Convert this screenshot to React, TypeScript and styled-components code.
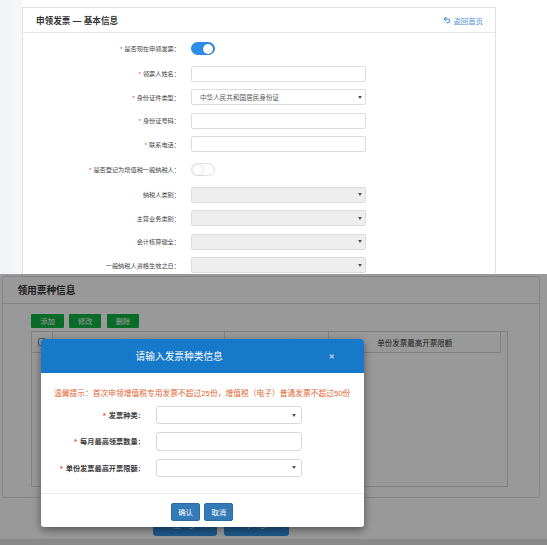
import styled, { createGlobalStyle } from "styled-components";
import { Undo2 } from "lucide-react";

const GlobalStyle = createGlobalStyle`
  html, body {
    margin: 0;
    padding: 0;
    background: #fff;
  }
  body {
    font-family: "Liberation Sans", "Noto Sans CJK SC", sans-serif;
    color: #333;
  }
  * {
    box-sizing: border-box;
  }
`;

const Page = styled.div`
  width: 547px;
  height: 545px;
  overflow: hidden;
  display: flex;
  flex-direction: column;
`;

/* ---------- top: basic info card ---------- */

const TopArea = styled.div`
  display: flex;
  height: 274px;
  flex-shrink: 0;
  overflow: hidden;
  background: #fff;
`;

const SideStrip = styled.div`
  width: 22px;
  flex-shrink: 0;
  background: linear-gradient(90deg, #f1f3f6, #f6f7f9);
`;

const InfoCard = styled.section`
  margin-top: 7px;
  width: 474px;
  border: 1px solid #e1e1e1;
  border-bottom: none;
  background: #fff;
`;

const InfoHeader = styled.div`
  height: 25px;
  display: flex;
  align-items: center;
  justify-content: space-between;
  padding: 0 12px 0 13px;
  border-bottom: 1px solid #e6e6e6;
`;

const InfoTitle = styled.h2`
  margin: 0;
  font-size: 8.6px;
  font-weight: bold;
  color: #333;
`;

const BackLink = styled.a`
  display: flex;
  align-items: center;
  gap: 2px;
  font-size: 7.4px;
  color: #4a8fd8;
  text-decoration: none;
`;

const Form = styled.div`
  padding-top: 2px;
  display: flex;
  flex-direction: column;
`;

const Row = styled.div<{ $h: number }>`
  height: ${(p) => p.$h}px;
  display: grid;
  grid-template-columns: 157px 175px;
  column-gap: 11px;
  align-items: center;
`;

const Label = styled.label`
  text-align: right;
  font-size: 6.2px;
  color: #444;
  white-space: nowrap;
`;

const Star = styled.span`
  color: #e4393c;
  margin-right: 2px;
`;

const Field = styled.div<{ $disabled?: boolean }>`
  height: 16px;
  border: 1px solid #dcdcdc;
  border-radius: 2px;
  background: ${(p) => (p.$disabled ? "#eeeeee" : "#fff")};
  display: flex;
  align-items: center;
  justify-content: space-between;
  padding: 0 3px 0 8px;
  font-size: 6.6px;
  color: #555;
`;

const Caret = styled.span<{ $size?: number }>`
  width: 0;
  height: 0;
  border-left: ${(p) => (p.$size ?? 4) / 2}px solid transparent;
  border-right: ${(p) => (p.$size ?? 4) / 2}px solid transparent;
  border-top: ${(p) => ((p.$size ?? 4) * 3) / 4}px solid #555;
  margin-left: auto;
`;

const Toggle = styled.span<{ $on?: boolean }>`
  width: 24px;
  height: 13px;
  border-radius: 7px;
  display: flex;
  align-items: center;
  justify-content: ${(p) => (p.$on ? "flex-end" : "flex-start")};
  padding: 1px;
  background: ${(p) => (p.$on ? "#2c8de6" : "#fff")};
  border: 1px solid ${(p) => (p.$on ? "#2c8de6" : "#e0e0e0")};

  &::after {
    content: "";
    width: 10px;
    height: 10px;
    border-radius: 50%;
    background: #fff;
    box-shadow: 0 0 2px rgba(0, 0, 0, 0.25);
  }
`;

/* ---------- bottom: ticket card under the modal ---------- */

const BottomArea = styled.div`
  position: relative;
  flex: 1;
  background: #fff;
  display: flex;
  flex-direction: column;
`;

const BottomContent = styled.div`
  padding: 1.5px 7px 0 1.7px;
`;

const TicketCard = styled.section`
  width: 538.3px;
  border: 1px solid #dcdcdc;
  border-radius: 3px;
`;

const TicketHeader = styled.div`
  height: 27px;
  display: flex;
  align-items: center;
  padding-left: 14.7px;
  border-bottom: 1px solid #dcdcdc;
`;

const TicketTitle = styled.h2`
  margin: 0;
  font-size: 9.7px;
  font-weight: bold;
  color: #333;
`;

const TicketBody = styled.div`
  padding: 10.8px 0 10.6px 28.7px;
`;

const ActionRow = styled.div`
  display: flex;
  gap: 5.5px;
`;

const GreenButton = styled.button`
  width: 32.3px;
  height: 13.4px;
  border: none;
  border-radius: 1px;
  background: #10b244;
  color: #fff;
  font-family: inherit;
  font-size: 7.3px;
  padding: 0;
`;

const TableWrap = styled.div`
  margin-top: 3.3px;
  width: 476.6px;
  height: 155.7px;
  border: 1px solid #d6d6d6;
`;

const TableHead = styled.div`
  width: 469px;
  height: 21.3px;
  display: grid;
  grid-template-columns: 19.6px 172px 104px 1fr;
  border-bottom: 1px solid #d6d6d6;
  border-right: 1px solid #d6d6d6;
`;

const HeadCell = styled.div`
  display: flex;
  align-items: center;
  justify-content: center;
  font-size: 7.5px;
  color: #333;
  & + & {
    border-left: 1px solid #d6d6d6;
  }
`;

const CheckBox = styled.span`
  width: 8px;
  height: 8px;
  border: 1px solid #888;
  border-radius: 2px;
  background: #fff;
`;

const NavRow = styled.div`
  margin-top: 14.7px;
  padding-left: 151px;
  display: flex;
  gap: 7px;
`;

const NavButton = styled.button`
  width: 64.6px;
  height: 23px;
  border: none;
  border-radius: 3px;
  background: #3296ea;
  color: #fff;
  font-family: inherit;
  font-size: 8px;
`;

const FooterStrip = styled.div`
  margin-top: auto;
  height: 5.7px;
  background: #e4e4e4;
`;

const Overlay = styled.div`
  position: absolute;
  inset: 0;
  background: rgba(0, 0, 0, 0.4);
`;

/* ---------- modal ---------- */

const Modal = styled.div`
  position: absolute;
  left: 40.7px;
  top: 65.3px;
  width: 323px;
  height: 188.2px;
  background: #fff;
  border-radius: 3px;
  box-shadow: 0 3px 9px rgba(0, 0, 0, 0.45);
  display: flex;
  flex-direction: column;
  overflow: hidden;
`;

const ModalHeader = styled.div`
  height: 33.4px;
  flex-shrink: 0;
  background: #1779c9;
  display: flex;
  align-items: center;
  padding-right: 18px;
`;

const ModalTitle = styled.h3`
  flex: 1;
  margin: 0;
  text-align: center;
  font-size: 9.7px;
  font-weight: normal;
  color: #fff;
`;

const CloseButton = styled.span`
  width: 28px;
  text-align: center;
  font-family: "DejaVu Sans", sans-serif;
  font-size: 7px;
  color: #a3c2e0;
  padding-top: 3px;
`;

const ModalBody = styled.div`
  padding: 16.8px 0 16px;
  border-bottom: 1px solid #ebebeb;
  display: flex;
  flex-direction: column;
  gap: 8px;
`;

const Notice = styled.p`
  margin: 0 0 -1.5px;
  height: 10px;
  line-height: 10px;
  text-align: center;
  font-size: 7.75px;
  color: #e4642e;
  white-space: nowrap;
`;

const ModalRow = styled.div`
  height: 18.3px;
  display: grid;
  grid-template-columns: 104.1px 146px;
  column-gap: 11.2px;
  align-items: center;
`;

const ModalLabel = styled.label`
  text-align: right;
  font-size: 7.2px;
  font-weight: bold;
  color: #3a3a3a;
  white-space: nowrap;
`;

const ModalStar = styled.span`
  color: #e4393c;
  margin-right: 3px;
`;

const ModalField = styled.div`
  height: 18.3px;
  border: 1px solid #d8d8d8;
  border-radius: 3px;
  background: #fff;
  display: flex;
  align-items: center;
  padding: 0 5px;
`;

const ModalFooter = styled.div`
  flex: 1;
  display: flex;
  justify-content: center;
  gap: 4.3px;
  padding-top: 9px;
`;

const BlueButton = styled.button`
  width: 29px;
  height: 18px;
  border: 1px solid #2e6da4;
  border-radius: 2px;
  background: #337ab7;
  color: #fff;
  font-family: inherit;
  font-size: 7.3px;
  padding: 0;
`;

type InfoRow = {
  label: string;
  required?: boolean;
  kind: "toggle-on" | "toggle-off" | "input" | "select" | "disabled";
  value?: string;
};

const infoRows: InfoRow[] = [
  { label: "是否现在申领发票：", required: true, kind: "toggle-on" },
  { label: "领票人姓名：", required: true, kind: "input" },
  { label: "身份证件类型：", required: true, kind: "select", value: "中华人民共和国居民身份证" },
  { label: "身份证号码：", required: true, kind: "input" },
  { label: "联系电话：", required: true, kind: "input" },
  { label: "是否登记为增值税一般纳税人：", required: true, kind: "toggle-off" },
  { label: "纳税人类别：", kind: "disabled" },
  { label: "主营业务类别：", kind: "disabled" },
  { label: "会计核算健全：", kind: "disabled" },
  { label: "一般纳税人资格生效之日：", kind: "disabled" },
];

function renderControl(row: InfoRow) {
  switch (row.kind) {
    case "toggle-on":
      return <Toggle $on />;
    case "toggle-off":
      return <Toggle />;
    case "input":
      return <Field />;
    case "select":
      return (
        <Field>
          <span>{row.value}</span>
          <Caret />
        </Field>
      );
    default:
      return (
        <Field $disabled>
          <Caret />
        </Field>
      );
  }
}

export default function App() {
  return (
    <Page>
      <GlobalStyle />
      <TopArea>
        <SideStrip />
        <InfoCard>
          <InfoHeader>
            <InfoTitle>申领发票 — 基本信息</InfoTitle>
            <BackLink href="#">
              <Undo2 size={8} strokeWidth={3.2} />
              返回首页
            </BackLink>
          </InfoHeader>
          <Form>
            {infoRows.map((row) => (
              <Row key={row.label} $h={row.kind.startsWith("toggle") ? 27 : 23.5}>
                <Label>
                  {row.required && <Star>*</Star>}
                  {row.label}
                </Label>
                {renderControl(row)}
              </Row>
            ))}
          </Form>
        </InfoCard>
      </TopArea>

      <BottomArea>
        <BottomContent>
          <TicketCard>
            <TicketHeader>
              <TicketTitle>领用票种信息</TicketTitle>
            </TicketHeader>
            <TicketBody>
              <ActionRow>
                <GreenButton>添加</GreenButton>
                <GreenButton>修改</GreenButton>
                <GreenButton>删除</GreenButton>
              </ActionRow>
              <TableWrap>
                <TableHead>
                  <HeadCell>
                    <CheckBox />
                  </HeadCell>
                  <HeadCell>发票种类</HeadCell>
                  <HeadCell>每月最高领票数量</HeadCell>
                  <HeadCell>单份发票最高开票限额</HeadCell>
                </TableHead>
              </TableWrap>
            </TicketBody>
          </TicketCard>
          <NavRow>
            <NavButton>上一步</NavButton>
            <NavButton>下一步</NavButton>
          </NavRow>
        </BottomContent>
        <FooterStrip />

        <Overlay />
        <Modal>
          <ModalHeader>
            <ModalTitle>请输入发票种类信息</ModalTitle>
            <CloseButton>✖</CloseButton>
          </ModalHeader>
          <ModalBody>
            <Notice>温馨提示：首次申领增值税专用发票不超过25份，增值税（电子）普通发票不超过50份</Notice>
            <ModalRow>
              <ModalLabel>
                <ModalStar>*</ModalStar>发票种类：
              </ModalLabel>
              <ModalField>
                <Caret $size={4} />
              </ModalField>
            </ModalRow>
            <ModalRow>
              <ModalLabel>
                <ModalStar>*</ModalStar>每月最高领票数量：
              </ModalLabel>
              <ModalField />
            </ModalRow>
            <ModalRow>
              <ModalLabel>
                <ModalStar>*</ModalStar>单份发票最高开票限额：
              </ModalLabel>
              <ModalField>
                <Caret $size={4} />
              </ModalField>
            </ModalRow>
          </ModalBody>
          <ModalFooter>
            <BlueButton>确认</BlueButton>
            <BlueButton>取消</BlueButton>
          </ModalFooter>
        </Modal>
      </BottomArea>
    </Page>
  );
}
